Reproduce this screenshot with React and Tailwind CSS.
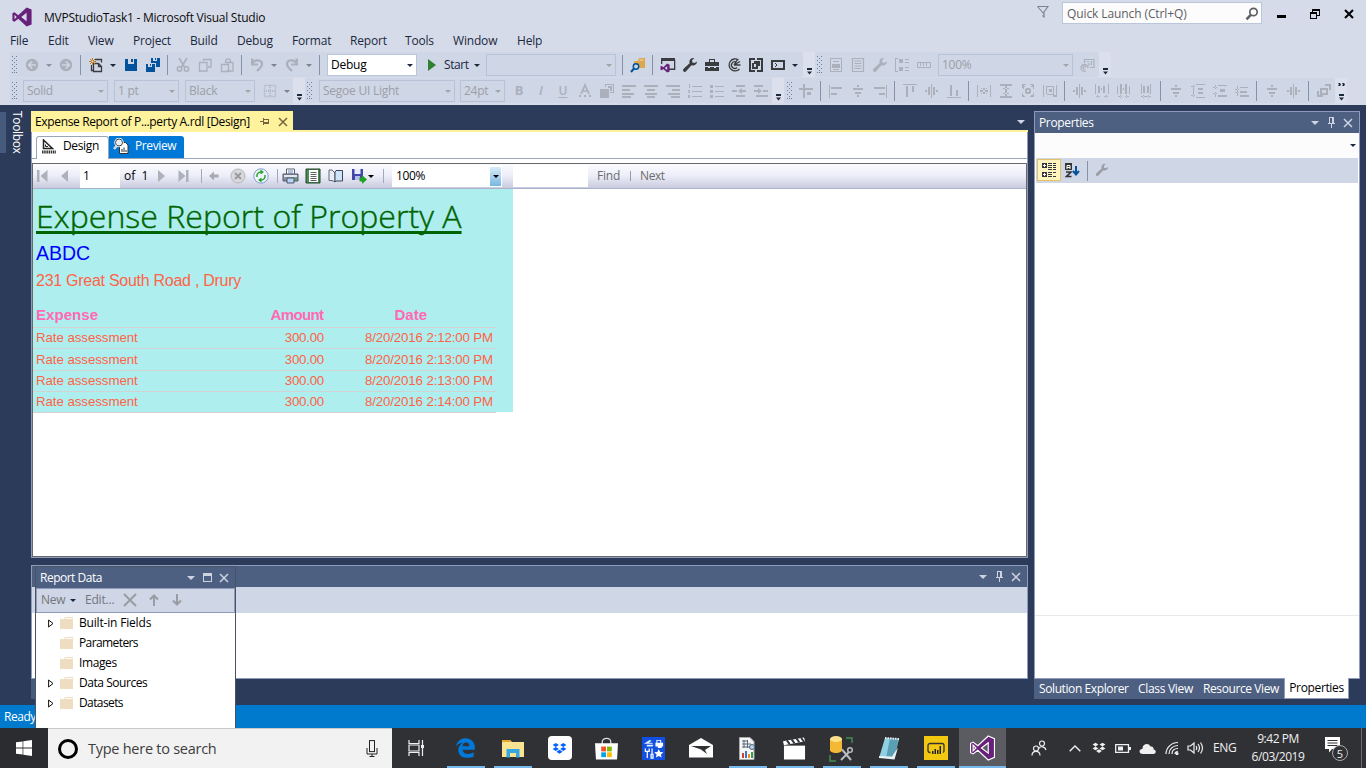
import React from "react";

const UI = "font-['Open_Sans','Noto_Sans',sans-serif]";

/* ---------- icon helpers ---------- */
function Ico({ children, className = "", size = 16, box = 16 }) {
  return (
    <svg className={"shrink-0 " + className} width={size} height={size} viewBox={`0 0 ${box} ${box}`} fill="currentColor">
      {children}
    </svg>
  );
}
function P({ d, className = "", crisp = true }) {
  return (
    <Ico className={className}>
      <path d={d} shapeRendering={crisp ? "crispEdges" : "auto"} />
    </Ico>
  );
}
function L({ d, w = 1, className = "" }) {
  return (
    <Ico className={className}>
      <path d={d} fill="none" stroke="currentColor" strokeWidth={w} />
    </Ico>
  );
}
const Slot = ({ children, className = "" }) => (
  <div className={"flex h-full w-[22px] shrink-0 items-center justify-center " + className}>{children}</div>
);
const Sep = () => (
  <div className="flex h-full w-2 shrink-0 items-center pl-[3px]">
    <div className="h-5 w-px bg-[#8591a9]" />
  </div>
);
const Caret = ({ className = "text-[#1b293e]" }) => (
  <svg className={"shrink-0 " + className} width="6" height="3" viewBox="0 0 6 3" fill="currentColor">
    <path d="M0 0h6L3 3z" />
  </svg>
);
const CaretSlot = ({ className }) => (
  <div className="flex h-full w-3 shrink-0 items-center justify-center">
    <Caret className={className} />
  </div>
);
const Grip = () => (
  <svg className="shrink-0" width="10" height="18" viewBox="0 0 10 18" fill="#6c7f9f" shapeRendering="crispEdges">
    {[0, 4, 8, 12, 16].map((y) => (
      <path key={y} d={`M2 ${y}h1v1h-1zM6 ${y}h1v1h-1zM4 ${y + 2 > 17 ? y : y + 2}h1v1h-1z`} />
    ))}
  </svg>
);
const Overflow = ({ arrows }) => (
  <div className="flex h-full w-3 shrink-0 justify-center bg-[#dce0ec] pt-[5px]">
    <svg width="7" height="18" viewBox="0 0 7 18" fill="#1b293e">
      {arrows && <path d="M0 0h2l1 1.500L2 3H0l1-1.500zM4 0h2l1 1.500L6 3H4l1-1.500z" />}
      <path d="M1 11h5v1.500h-5z" shapeRendering="crispEdges" />
      <path d="M1 14.500h5l-2.500 3z" />
    </svg>
  </div>
);
const Combo = ({ children, className, caret = "text-[#a2a4a5]" }) => (
  <div className={"flex h-[22px] shrink-0 items-center justify-between border pl-[3px] pr-[3px] text-[12px] tracking-[-0.25px] " + className}>
    <span>{children}</span>
    <Caret className={caret} />
  </div>
);
function VSLogo({ size, fill }) {
  return (
    <svg width={size} height={size} viewBox="0 0 24 24" fill={fill}>
      <path fillRule="evenodd" d="M17.500 0.500L23.500 3v18l-6 2.500L7.500 14.200 3 17.700 0.500 16.500v-9L3 6.300l4.500 3.500zM17.500 7L11 12l6.500 5zM3 9.300v5.400L5.700 12z" />
    </svg>
  );
}
const WRENCH = "M15 4.500a4 4 0 0 1-5.500 3.700L3.800 14.400a1.700 1.700 0 0 1-2.400-2.400L7.600 6.300A4 4 0 0 1 12.200 1L10 3.400l.4 2.100 2.200.5z";

/* ---------- first tool bar icons ---------- */
const CircleArrow = ({ flip }) => (
  <Ico className={flip ? "rotate-180 text-[#abb0bb]" : "text-[#abb0bb]"}>
    <circle cx="8" cy="8" r="6.200" />
    <path d="M12 8H5M8.200 4.500L4.700 8l3.500 3.500" stroke="#cfd6e5" strokeWidth="1.700" fill="none" />
  </Ico>
);
const NewItem = () => (
  <Ico className="text-[#3a3b3f]">
    <path d="M7 2.500h6.500v3M3.500 8v5.500h2M5.500 6.500h5l3 3v5h-8zM10.500 6.500v3h3" fill="none" stroke="currentColor" strokeWidth="1.300" />
    <path d="M4.500 1v7M1 4.500h7M2 2l5 5M7 2L2 7" stroke="#c27d1a" strokeWidth="1" />
    <circle cx="4.500" cy="4.500" r="1" fill="#cfd6e5" />
  </Ico>
);
const Save = () => (
  <Ico className="text-[#00539c]">
    <path fillRule="evenodd" d="M2 2h12v12H2zM5 2v5h6V2z" shapeRendering="crispEdges" />
    <path d="M8 2h2v3H8z" shapeRendering="crispEdges" />
  </Ico>
);
const SaveAll = () => (
  <Ico className="text-[#00539c]">
    <path d="M6 1h9v9h-4V6H6z M1 7h9v8H1z" shapeRendering="crispEdges" />
    <path d="M8 1h4v3H8zM3 7h4v3H3z" fill="#cfd6e5" shapeRendering="crispEdges" />
    <path d="M10 1h1v2h-1zM5 7h1v2H5z" shapeRendering="crispEdges" />
  </Ico>
);
const Cut = () => (
  <Ico className="text-[#abb0bb]">
    <path d="M4 1l5.500 9M12 1L6.500 10" stroke="currentColor" strokeWidth="1.700" fill="none" />
    <circle cx="4.500" cy="12" r="2.200" fill="none" stroke="currentColor" strokeWidth="1.500" />
    <circle cx="11.500" cy="12" r="2.200" fill="none" stroke="currentColor" strokeWidth="1.500" />
  </Ico>
);
const Undo = ({ flip }) => (
  <Ico className={flip ? "-scale-x-100 text-[#abb0bb]" : "text-[#abb0bb]"}>
    <path d="M4 6C6 2 13 2.500 13 7c0 2.500-2 4-5 7" fill="none" stroke="currentColor" strokeWidth="2.200" />
    <path d="M2 1.500v7h7V6.500H4.500l0-5z" />
  </Ico>
);

function TitleBar() {
  return (
    <div className="flex h-8 shrink-0 items-start">
      <div className="ml-3 mt-[7px] w-8"><VSLogo size={20} fill="#68217a" /></div>
      <div className="mt-2 w-[988px] text-[12px] leading-[20px] tracking-[-0.25px] text-[#0b0b0b]">MVPStudioTask1 - Microsoft Visual Studio</div>
      <svg className="ml-[4px] mt-[5px]" width="14" height="14" viewBox="0 0 14 14" fill="none" stroke="#7b828f" strokeWidth="1.100">
        <path d="M1.500 1.500h10.500L8 7v5L6.500 10.500M1.500 1.500L8 9" />
      </svg>
      <div className="ml-3 mt-[2px] flex h-[22px] w-[200px] items-center justify-between border border-[#bac6d9] bg-[#fcfcfc] pl-1 pr-[2px] pt-px">
        <span className="text-[12px] tracking-[-0.1px] text-[#5c5f66]">Quick Launch (Ctrl+Q)</span>
        <svg width="14" height="14" viewBox="0 0 14 14" fill="none" stroke="#5c5f66">
          <circle cx="8.500" cy="5" r="3.700" strokeWidth="1.700" />
          <path d="M5.800 7.800L1.500 12.300" strokeWidth="2.600" />
        </svg>
      </div>
      <div className="ml-[15px] mt-[15px] h-[3px] w-[9px] bg-black" />
      <svg className="ml-6 mt-[9px]" width="10" height="10" viewBox="0 0 10 10" fill="#000" shapeRendering="crispEdges">
        <path fillRule="evenodd" d="M2 0h8v7H7v3H0V3h2zM3 2v1h4v3h2V2zM1 5v4h5V5z" />
      </svg>
      <svg className="ml-6 mt-[9px]" width="10" height="10" viewBox="0 0 10 10" stroke="#000" strokeWidth="2"><path d="M1 1l8 8M9 1L1 9" /></svg>
    </div>
  );
}

function MenuBar() {
  return (
    <div className="flex h-5 shrink-0 pl-[10px] text-[12px] leading-[18px] tracking-[-0.18px] text-[#1b293e]">
      <span className="w-[38px]">File</span><span className="w-10">Edit</span><span className="w-[45px]">View</span>
      <span className="w-[57px]">Project</span><span className="w-[47px]">Build</span><span className="w-[55px]">Debug</span>
      <span className="w-[58px]">Format</span><span className="w-[55px]">Report</span><span className="w-12">Tools</span>
      <span className="w-16">Window</span><span>Help</span>
    </div>
  );
}

function ToolBarTop() {
  return (
    <div className="flex h-[25px] shrink-0 pl-[10px] text-[#abb0bb]">
      <div className="flex items-center bg-[#cfd6e5] pt-px">
        <Grip />
        <Slot className="ml-px"><CircleArrow /></Slot>
        <CaretSlot className="text-[#8d939e]" />
        <Slot><CircleArrow flip /></Slot>
        <Sep />
        <Slot><NewItem /></Slot>
        <CaretSlot />
        <Slot className="ml-px"><Save /></Slot>
        <Slot><SaveAll /></Slot>
        <Sep />
        <Slot><Cut /></Slot>
        <Slot><L d="M6.500 4V2.500h7.500v7.500H11M2.500 5.500h7.500v8.500H2.500z" w={1.300} /></Slot>
        <Slot><L d="M6.500 6V4.500c0-3.500 5-3.500 5 0v1H14v8.500H7.500M2.500 7.500h7v7h-7zM7 5.500h6" w={1.300} /></Slot>
        <Sep />
        <Slot><Undo /></Slot>
        <CaretSlot className="text-[#7d828c]" />
        <Slot className="ml-px"><Undo flip /></Slot>
        <CaretSlot className="text-[#7d828c]" />
        <div className="w-px" />
        <Sep />
        <Combo className="ml-[3px] w-[90px] border-[#bac6d9] bg-white text-black" caret="text-[#1b293e]">Debug</Combo>
        <Slot className="ml-1 text-[#2f8132]"><Ico><path d="M4 2v12l8-6z" /></Ico></Slot>
        <span className="ml-px w-[30px] text-[12px] tracking-[-0.45px] text-[#1b293e]">Start</span>
        <Caret />
        <Combo className="ml-[6px] w-[130px] border-[#b9c3d7]" />
        <div className="w-[3px]" />
        <Sep />
        <Slot>
          <Ico>
            <path d="M4 4h4l1-3h6v10H4z" fill="#dba850" />
            <path d="M9.500 3h4" stroke="#f2dcb0" />
            <circle cx="6" cy="9.500" r="2.700" fill="#cfd6e5" stroke="#00539c" strokeWidth="1.500" />
            <path d="M4 11.500L1 15" stroke="#00539c" strokeWidth="2" />
          </Ico>
        </Slot>
        <Sep />
        <Slot className="text-[#3a3b3f]">
          <Ico>
            <path d="M1 1h14v3H1zM14 3h1.300v10H9v-1.500h5zM1 3h1.300v4H1z" />
            <g transform="translate(0.500,6.500) scale(0.380)" fill="#68217a"><path fillRule="evenodd" d="M17.500 0L24 3v18l-6.500 3L7.500 14.200 3 17.700 0 16.500v-9L3 6.300l4.500 3.500zM17.500 7L11 12l6.500 5z" /></g>
          </Ico>
        </Slot>
        <Slot className="text-[#3a3b3f]"><P d={WRENCH} crisp={false} /></Slot>
        <Slot className="text-[#3a3b3f]"><P d="M5 2h6v3h4v4H1V5h4zM6 3v2h4V3zM1 10h3v1h2v-1h4v1h2v-1h3v4H1z" /></Slot>
        <Slot className="text-[#3a3b3f]"><L d="M12.500 3A6 6 0 1 0 13.500 12M10.500 5.300A3.300 3.300 0 1 0 11 10.500M8 8l3.500-5.500M8 8l6-3.500M8 8h6.500" w={1.300} /></Slot>
        <Slot className="text-[#3a3b3f]"><Ico><path fillRule="evenodd" shapeRendering="crispEdges" d="M1 1h6v2H3v10h4v2H1zM9 1h6v14H9v-2h4V3H9z" /><path fillRule="evenodd" d="M6 4h6v5h-2v3H4V6h2zM6 7v3h2V7z" shapeRendering="crispEdges" /></Ico></Slot>
        <Slot className="text-[#3a3b3f]"><Ico><path fillRule="evenodd" shapeRendering="crispEdges" d="M1 3h14v10H1zM3 5v6h10V5z" /><path d="M5 6l2 2-2 2" stroke="currentColor" fill="none" /></Ico></Slot>
        <CaretSlot />
        <div className="w-[2px]" />
      </div>
      <Overflow />
      <div className="flex items-center bg-[#cfd6e5] pt-px">
        <Grip />
        <Slot><P d="M2 1h12v14H2zM3 2v12h10V2zM5 4h6v1H5zM4 7h8v4H4zM5 8v0h6v0zM5 12h6v1H5z" /></Slot>
        <Slot><L d="M2.500 1.500h11v13h-11zM4.500 4h7M4.500 6.500h7M4.500 9h7M4.500 11.500h7" w={1.200} /></Slot>
        <Slot><P d={WRENCH} crisp={false} /></Slot>
        <Slot><P d="M1 1h3v1H2v12h2v1H1zM5 2h4v4H5zM5 10h4v4H5zM11 2h4v1h-4zM11 5h4v1h-4zM11 10h4v1h-4zM11 13h4v1h-4z" /></Slot>
        <Slot><P d="M1 5h14v6H1zM2 6v4h12V6zM4 6h1v3H4zM7 6h1v3H7zM10 6h1v3h-1z" /></Slot>
        <Combo className="ml-[3px] w-[135px] border-[#b9c3d7] text-[#9ba0a8]">100%</Combo>
        <Slot className="ml-[3px]"><L d="M5.500 6V2.500h9.500v8H11M8 4.500h2M12.500 4v4M10 6v3M9 11a3.500 3.500 0 1 0-2 3M7 10.500a1.500 1.500 0 1 0-1 1.500" w={1.200} /></Slot>
        <div className="w-px" />
      </div>
      <Overflow />
    </div>
  );
}

const HBARS = "M1 7h2v2H1zM4 4h2v8H4zM7 1h1v14H7zM9 4h2v8H9zM12 7h2v2h-2z";
const VBARS = "M7 2h2v2H7zM3 5h10v2H3zM5 9h6v2H5zM7 12h2v2H7z";
const ICONS2 = [
  ["M1 2h1v13H1zM3 4h11v2H3zM3 10h6v2H3z", VBARS, "M14 2h1v13h-1zM2 4h11v2H2zM7 10h6v2H7z"],
  ["M1 1h14v1H1zM4 3h2v11H4zM10 3h2v6h-2z", HBARS, "M1 14h14v1H1zM4 2h2v11H4zM10 7h2v6h-2z"],
  ["M1 2h1v12H1zM14 2h1v12h-1zM4 7h8v2H4zM7 5h2v6H7zM5 5h1v1H5zM10 5h1v1h-1zM5 10h1v1H5zM10 10h1v1h-1z", "M2 1h12v2H2zM2 13h12v2H2zM7 3h2v10H7zM5 5h6v1H5zM5 10h6v1H5z", "M2 1h4v1H4v1h1v1H4v2H3V5H2zM10 1h4v5h-1V4h-2V3h1V2h-2zM2 10h1v2h1v1h1v1H2zM13 10h1v4h-4v-1h1v-1h2zM6 5h4v1H6zM5 6h6v4H5zM6 10h4v1H6zM7 7v2h2V7z", "M1 2h1v12H1zM14 2h1v12h-1zM4 3h8v1H4zM4 4h1v7H4zM11 4h1v7h-1zM5 11h7v1H5zM7 6h3v3H7zM11 12h3v2h-3z"],
  [HBARS, "M1 1h1v10H1zM4 3h2v7H4zM7 5h1v2H7zM9 3h2v7H9zM14 1h1v10h-1zM2 13h4v1H2zM10 13h4v1h-4zM3 12h1v3H3zM12 12h1v3h-1z", "M1 3h1v8H1zM4 1h2v10H4zM7 5h1v2H7zM9 1h2v10H9zM13 3h1v8h-1zM2 13h4v1H2zM9 13h4v1H9zM4 12h1v3H4zM10 12h1v3h-1z", "M3 1h1v10H3zM5 3h2v7H5zM9 3h2v7H9zM12 1h1v10h-1zM3 13h10v1H3zM5 12h1v3H5zM10 12h1v3h-1z"],
  [VBARS, "M3 2h1v12H3zM1 3h4v1H1zM1 12h4v1H1zM6 1h9v1H6zM8 5h5v2H8zM8 9h5v2H8zM6 14h9v1H6z", "M3 2h1v4H3zM1 4h4v1H1zM3 9h1v5H3zM1 10h4v1H1zM6 2h9v1H6zM8 6h5v3H8zM6 12h9v2H6z", "M3 3h1v10H3zM1 6h4v1H1zM1 9h4v1H1zM6 4h8v1H6zM6 8h7v2H6zM6 12h9v2H6z"],
  [VBARS, HBARS],
  ["M1 8h2v4h4v2H1zM4 5h8v7H4zM6 7v3h4V7zM9 1h6v6h-2V3H9z"],
];

function ToolBarFormat() {
  return (
    <div className="mt-px flex h-[25px] shrink-0 pl-[10px] text-[#abb0bb]">
      <div className="flex items-center bg-[#cfd6e5] pt-px">
        <Grip />
        <Combo className="ml-[3px] w-[85px] border-[#b9c3d7] text-[#9ba0a8]">Solid</Combo>
        <Combo className="ml-[6px] w-[65px] border-[#b9c3d7] text-[#9ba0a8]">1 pt</Combo>
        <Combo className="ml-[6px] w-[70px] border-[#b9c3d7] text-[#9ba0a8]">Black</Combo>
        <Slot className="ml-1"><Ico><path d="M2.500 2.500h11v11h-11zM8 2v12M2 8h12" fill="none" stroke="currentColor" strokeDasharray="1 1" strokeWidth="1.300" /></Ico></Slot>
        <CaretSlot className="text-[#7d828c]" />
      </div>
      <Overflow />
      <div className="flex items-center bg-[#cfd6e5] pt-px">
        <Grip />
        <Combo className="ml-1 w-[136px] border-[#b9c3d7] text-[#9ba0a8]">Segoe UI Light</Combo>
        <Combo className="ml-[5px] w-[45px] border-[#b9c3d7] text-[#9ba0a8]">24pt</Combo>
        <Slot className="ml-[3px] text-[13px] font-bold">B</Slot>
        <Slot className="text-[13px] font-semibold italic">I</Slot>
        <Slot className="text-[12px] font-semibold underline underline-offset-2">U</Slot>
        <Slot><Ico><path d="M4 11L8 2l4 9M5.500 8h5" fill="none" stroke="currentColor" strokeWidth="1.700" /><path d="M2 12h2v2H2zM7 12h2v2H7zM12 12h2v2h-2z" /></Ico></Slot>
        <Slot><Ico><path fillRule="evenodd" shapeRendering="crispEdges" d="M6 1h9v9h-4V9h3V2H7v2H6zM9 3h4v5h-2V5H9zM1 6h9v9H1z" /></Ico></Slot>
        <Slot><P d="M1 2h14v2H1zM1 6h8v2H1zM1 10h12v2H1zM1 13h9v2H1z" /></Slot>
        <Slot><P d="M1 2h14v2H1zM4 6h8v2H4zM2 10h12v2H2zM4 13h8v2H4z" /></Slot>
        <Slot><P d="M1 2h14v2H1zM7 6h8v2H7zM3 10h12v2H3zM6 13h9v2H6z" /></Slot>
        <Slot><P d="M2 1h1v4H2zM1 7h2v1H1zM2 8h1v2H1zM1 12h2v3H1zM5 3h10v1H5zM5 8h10v1H5zM5 13h10v1H5z" /></Slot>
        <Slot><P d="M1 2h3v3H1zM1 7h3v3H1zM1 12h3v3H1zM6 3h9v1H6zM6 8h9v1H6zM6 13h9v1H6z" /></Slot>
        <Slot><P d="M5 2h9v2H5zM1 7h5v2H1zM7 8l4-3v2h4v2h-4v2zM5 12h9v2H5z" crisp={false} /></Slot>
        <Slot><P d="M1 2h9v2H1zM10 7h5v2h-5zM9 8L5 5v2H1v2h4v2zM3 12h12v2H3z" crisp={false} /></Slot>
      </div>
      <Overflow />
      <div className="flex items-center bg-[#cfd6e5] pt-px">
        <div className="w-px" />
        <Grip />
        <Slot><P d="M1 5h14v2H1zM5 1h2v14H5zM9 9h4v3H9z" /></Slot>
        {ICONS2.map((group, i) => (
          <React.Fragment key={i}>
            <Sep />
            {group.map((d, j) => (
              <Slot key={j}><Ico><path d={d} fillRule="evenodd" shapeRendering="crispEdges" /></Ico></Slot>
            ))}
          </React.Fragment>
        ))}
      </div>
      <Overflow arrows />
    </div>
  );
}

/* ---------- document well ---------- */
const Pin = ({ className }) => (
  <svg className={"shrink-0 " + className} width="9" height="11" viewBox="0 0 9 11" fill="currentColor" shapeRendering="crispEdges">
    <path d="M2 0h5v6h1v1H5v4H4V7H1V6h1zM3 1v5h2V1z" fillRule="evenodd" />
  </svg>
);
const Close = ({ size = 9, className }) => (
  <svg className={"shrink-0 " + className} width={size} height={size} viewBox="0 0 10 10" stroke="currentColor" strokeWidth="1.500"><path d="M1 1l8 8M9 1L1 9" /></svg>
);

function ViewerToolBar() {
  return (
    <div className="flex h-[25px] shrink-0 items-center border-b border-[#a9b3cc] bg-linear-to-b from-[#fbfbff] via-[#ecedf8] to-[#c9cbdf] text-[12px] text-black">
      <svg className="ml-1 shrink-0" width="11" height="12" viewBox="0 0 11 12" fill="#aeb1b9"><path d="M0 0h2.500v12H0zM10.500 0v12L3.500 6z" /></svg>
      <svg className="ml-[13px] shrink-0" width="7" height="12" viewBox="0 0 7 12" fill="#aeb1b9"><path d="M7 0v12L0 6z" /></svg>
      <div className="ml-3 flex h-full w-10 items-center bg-white pl-[3px]">1</div>
      <span className="ml-1 w-[34px] whitespace-pre">of  1</span>
      <svg className="shrink-0" width="7" height="12" viewBox="0 0 7 12" fill="#aeb1b9"><path d="M0 0v12L7 6z" /></svg>
      <svg className="ml-[13px] shrink-0" width="11" height="12" viewBox="0 0 11 12" fill="#aeb1b9"><path d="M8 0h2.500v12H8zM0.500 0v12L7.500 6z" /></svg>
      <div className="ml-3 h-[14px] w-px bg-[#a3a8bd]" />
      <svg className="ml-[7px] shrink-0" width="10" height="10" viewBox="0 0 10 10" fill="#a6a9ae"><path d="M0 5l5-4.500v3h4.500v3H5v3z" /></svg>
      <svg className="ml-[11px] shrink-0" width="16" height="16" viewBox="0 0 16 16"><circle cx="8" cy="8" r="7" fill="#d9d9dc" stroke="#b5b6ba" /><path d="M5 5l6 6M11 5l-6 6" stroke="#999ba0" strokeWidth="2" /></svg>
      <svg className="ml-[7px] shrink-0" width="16" height="16" viewBox="0 0 16 16"><circle cx="8" cy="8" r="7.200" fill="#eef5fd" stroke="#7f9fd0" /><path d="M4 9c-.5-3 1-5 4-5M12 7c.5 3-1 5-4 5" stroke="#2ba22b" strokeWidth="1.500" fill="none" /><path d="M7.500 1.500L11 4 7.500 6.500zM8.500 9.500v5L5 12z" fill="#2ba22b" /></svg>
      <div className="ml-2 h-[14px] w-px bg-[#a3a8bd]" />
      <svg className="ml-1 shrink-0" width="17" height="16" viewBox="0 0 17 16"><path d="M4.500 1h8v6h-8z" fill="#fff" stroke="#5a6270" /><path d="M6 3h5M6 5h5" stroke="#6e86b8" /><path d="M1 6h15v7H1z" fill="#8b93a2" stroke="#50586a" /><path d="M2 8h13" stroke="#e3e7ef" strokeWidth="2" /><path d="M5 10h7v5H5z" fill="#b9d2f2" stroke="#4a566e" /><circle cx="14" cy="11" r="1" fill="#3bb23b" /></svg>
      <svg className="ml-[6px] shrink-0" width="16" height="16" viewBox="0 0 16 16"><path d="M1 1h14v14H1z" fill="#4f8a57" stroke="#20462a" /><path d="M4 2h9v12H4z" fill="#fff" /><path d="M5.500 4.500h6M5.500 6.500h6M5.500 8.500h6M5.500 10.500h6M5.500 12.500h6" stroke="#5a5f68" /></svg>
      <svg className="ml-[7px] shrink-0" width="16" height="14" viewBox="0 0 16 14"><path d="M1 1h3l3 3v9l-3-1.500H1z" fill="#e9edf5" stroke="#60687a" /><path d="M8 1.500h6.500V12H8l-1 1V3z" fill="#cfe3f9" stroke="#3d4552" /></svg>
      <svg className="ml-[7px] shrink-0" width="16" height="16" viewBox="0 0 16 16"><path d="M1 1h11v11H1z" fill="#4146a8" /><path d="M3.500 1h6v5h-6z" fill="#e8eaff" /><path d="M4 8h5v4H4z" fill="#b8bce8" /><path d="M8.500 9.500h2.500V7l5 4.500-5 4.500v-2.500h-2.500z" fill="#22a022" /></svg>
      <Caret className="ml-px text-black" />
      <div className="ml-[9px] h-[14px] w-px bg-[#a3a8bd]" />
      <div className="ml-2 flex h-[22px] w-[110px] items-center justify-between bg-white pl-1 pr-px tracking-[-0.400px]">
        <span>100%</span>
        <span className="flex h-[19px] w-[11px] items-center justify-center bg-linear-to-b from-[#d9ecf9] to-[#76b7e0]"><Caret className="text-black" /></span>
      </div>
      <div className="ml-[11px] h-[22px] w-[75px] bg-white" />
      <span className="ml-[9px] w-[33px] tracking-[-0.2px] text-[#6d6d6d]">Find</span>
      <div className="h-[10px] w-px bg-[#9a9a9a]" />
      <span className="ml-[9px] tracking-[-0.400px] text-[#6d6d6d]">Next</span>
    </div>
  );
}

const ROWS = ["8/20/2016 2:12:00 PM", "8/20/2016 2:13:00 PM", "8/20/2016 2:13:00 PM", "8/20/2016 2:14:00 PM"];

function Report() {
  return (
    <div className="h-[223px] w-[480px] bg-[#afeeee] font-['Liberation_Sans',sans-serif]">
      <div className="h-[52px] whitespace-nowrap pl-[3px] pt-[6px] font-['Open_Sans','Noto_Sans',sans-serif] text-[32px] font-light leading-[42px] tracking-[0.040px] text-[#006400] underline decoration-[3px] underline-offset-[3px] [-webkit-text-stroke:0.4px] [text-decoration-skip-ink:none]">Expense Report of Property A</div>
      <div className="h-7 pl-[3px] text-[19.500px] leading-[24px] text-[#0000ff]">ABDC</div>
      <div className="h-[31px] pl-[3px] pt-px text-[16px] leading-[22px] tracking-[-0.270px] text-[#ff6347]">231 Great South Road , Drury</div>
      <div className="flex h-[28px] w-[463px] items-end border-b border-[#d3d3d3] pb-1 pl-[3px] text-[15px] font-bold leading-[17px] text-[#ff69b4]">
        <span className="w-[188px] tracking-[0.050px]">Expense</span>
        <span className="w-[101px] text-right tracking-[-0.600px]">Amount</span>
        <span className="w-[173px] pl-[71px]">Date</span>
      </div>
      {ROWS.map((date, i) => (
        <div key={i} className={(i === 1 ? "h-[22px]" : "h-[21px]") + " flex w-[463px] items-end border-b border-[#d3d3d3] pb-[3px] pl-[3px] text-[13.300px] leading-[15px] text-[#ff6347]"}>
          <span className="w-[188px] tracking-[-0.070px]">Rate assessment</span>
          <span className="w-[100px] text-right tracking-[-0.250px]">300.00</span>
          <span className="w-[169px] whitespace-nowrap text-right tracking-[-0.140px]">{date}</span>
        </div>
      ))}
    </div>
  );
}

function Document() {
  return (
    <div className="flex h-[447px] flex-col">
      <div className="flex h-[19px]">
        <div className="flex w-[262px] items-center bg-[#fff29d] pl-1 pt-0.5 text-[12px] text-black">
          <span className="w-[225px] whitespace-nowrap tracking-[-0.350px]">Expense Report of P...perty A.rdl [Design]</span>
          <svg className="shrink-0 text-[#75633d]" width="9" height="7" viewBox="0 0 9 7" fill="currentColor" shapeRendering="crispEdges"><path d="M0 3h3V0h1v1h5v5H4v1H3V4H0zM4 2v2h4V2z" fillRule="evenodd" /></svg>
          <Close size={10} className="ml-[9px] text-[#75633d]" />
        </div>
        <div className="flex flex-1 items-center justify-end pr-[3px] pt-[3px]"><svg width="8" height="4" viewBox="0 0 8 4" fill="#cfd6e5"><path d="M0 0h8L4 4z" /></svg></div>
      </div>
      <div className="h-0.5 shrink-0 bg-[#fff29d]" />
      <div className="flex flex-1 flex-col border border-t-0 border-[#8e9bbc] bg-white">
        <div className="flex h-[27px] shrink-0 items-end border-b border-[#9aa5b8] pl-1 text-[12px]">
          <div className="-mb-px flex h-[23px] w-[73px] items-center rounded-t-[3px] border border-b-0 border-[#9aa5b8] bg-white pl-[5px] pb-1">
            <svg width="14" height="15" viewBox="0 0 14 15" fill="none" stroke="#222"><path d="M1.500 1v8.500h9z" strokeWidth="1.500" /><path d="M3.500 5.500v2H6" /><path d="M0 13h14" strokeWidth="3" stroke="#333" strokeDasharray="1.500 .7" /></svg>
            <span className="ml-[7px] tracking-[-0.350px]">Design</span>
          </div>
          <div className="flex h-[22px] w-[75px] items-center rounded-tr-[3px] bg-[#0078d7] pb-[2px] pl-1 text-white">
            <svg width="16" height="16" viewBox="0 0 16 16"><path d="M6.500 4.500h6l2.500 2.500v8.500H6.500z" fill="#fff" stroke="#333" /><path d="M9 14v-3M11 14V9.500M13 14v-2" stroke="#333" /><circle cx="6" cy="4.500" r="3.500" fill="#d9eafa" stroke="#fff" strokeWidth="2.500" /><circle cx="6" cy="4.500" r="3.500" fill="#e9f2fa" stroke="#444" /><path d="M4 7.500L1 11" stroke="#ddd" strokeWidth="2.500" /></svg>
            <span className="ml-[6px] tracking-[-0.400px]">Preview</span>
          </div>
        </div>
        <div className="mt-1 flex flex-1 flex-col border border-[#696969]">
          <ViewerToolBar />
          <Report />
        </div>
      </div>
    </div>
  );
}

function PanelButtons() {
  return (
    <div className="flex items-center text-[#ced4df]">
      <svg width="8" height="4" viewBox="0 0 8 4" fill="currentColor"><path d="M0 0h8L4 4z" /></svg>
      <Pin className="ml-2" />
      <Close className="ml-[7px]" size={10} />
    </div>
  );
}

function PropertiesPanel() {
  return (
    <div className="mt-[6px] flex h-[588px] w-[326px] shrink-0 flex-col">
      <div className="flex h-[568px] shrink-0 flex-col border border-[#8e9bbc] bg-white">
        <div className="flex h-[21px] shrink-0 items-center justify-between bg-[#4d6082] pl-1 pr-[6px] text-[12px] tracking-[-0.350px] text-white">
          <span>Properties</span><PanelButtons />
        </div>
        <div className="flex h-[25px] shrink-0 items-center justify-end bg-[#fcfcfc] pr-[3px]"><Caret /></div>
        <div className="mx-px flex h-[25px] shrink-0 items-center bg-[#cfd6e5]">
          <div className="mb-px ml-px flex h-[22px] w-6 items-center justify-center border border-[#e5c365] bg-[#fdf4bf] text-[#33363d]">
            <Ico><path d="M1 1h5v5H1zM1 10h5v5H1zM7 1h4v1H7zM12 1h3v1h-3zM7 3h4v1H7zM12 3h3v1h-3zM7 5h4v1H7zM12 5h3v1h-3zM7 7h4v1H7zM12 7h3v1h-3zM7 10h4v1H7zM7 12h4v1H7zM7 14h4v1H7zM12 10h3v1h-3zM12 14h3v1h-3z" shapeRendering="crispEdges" /><path d="M2 3.500h3M3.500 2v3M2 12.500h3M3.500 11v3" stroke="#fff" /></Ico>
          </div>
          <svg className="ml-1 mb-px shrink-0" width="16" height="16" viewBox="0 0 16 16"><path d="M0 1h7v7H0z" fill="#333" /><path d="M2 7V3.500h3V7M2 5.500h3" stroke="#fff" fill="none" /><path d="M1 10h5l-4.500 4.500H6.500" stroke="#333" fill="none" strokeWidth="1.600" /><path d="M11 4v8M8 9l3 3.500L14 9" stroke="#00539c" fill="none" strokeWidth="2" /></svg>
          <div className="ml-[6px] h-5 w-px bg-[#8591a9]" />
          <div className="mb-px ml-[7px] text-[#9a9da3]"><svg width="14" height="14" viewBox="0 0 16 16" fill="currentColor"><path d={WRENCH} /></svg></div>
        </div>
        <div className="h-[433px] shrink-0 border-b border-[#e9e9ec]" />
      </div>
      <div className="flex h-5 text-[12px] text-white">
        <div className="flex h-5 w-[250px] items-center bg-[#4d6082] pl-[5px] tracking-[-0.400px]">
          <span className="w-[99px]">Solution Explorer</span><span className="w-[65px] tracking-[-0.300px]">Class View</span><span>Resource View</span>
        </div>
        <div className="-mt-px flex h-[21px] w-[65px] items-center justify-center border border-t-0 border-[#8e9bbc] bg-white tracking-[-0.350px] text-black">Properties</div>
      </div>
    </div>
  );
}

function OutputPanel() {
  return (
    <div className="mt-[7px] flex h-[134px] flex-col">
      <div className="flex h-[114px] flex-col border border-[#8e9bbc] bg-white">
        <div className="flex h-[21px] shrink-0 items-center justify-end bg-[#4d6082] pr-[6px]"><PanelButtons /></div>
        <div className="h-[26px] shrink-0 bg-[#cfd6e5]" />
      </div>
      <div className="h-5 w-2 bg-[#465a7d]" />
    </div>
  );
}

const TREE = [["Built-in Fields", true], ["Parameters", false], ["Images", false], ["Data Sources", true], ["Datasets", true]];
const TREE_TRACKING = ["tracking-[-0.180px]", "tracking-[-0.600px]", "tracking-[-0.400px]", "tracking-[-0.450px]", "tracking-[-0.600px]"];

function ReportData() {
  return (
    <div className="absolute left-[35px] top-[566px] flex h-[162px] w-[201px] flex-col border border-b-0 border-[#4a5364] bg-white text-[12px]">
      <div className="flex h-[21px] shrink-0 items-center bg-[#4d6082] pl-1 text-white">
        <span className="w-[147px] tracking-[-0.6px]"><span className="tracking-[-0.500px]">Report Data</span></span>
        <svg width="8" height="4" viewBox="0 0 8 4" fill="#ced4df"><path d="M0 0h8L4 4z" /></svg>
        <div className="ml-2 h-[9px] w-[9px] border border-t-[3px] border-[#ced4df]" />
        <Close size={10} className="ml-[7px] text-[#ced4df]" />
      </div>
      <div className="flex h-[25px] shrink-0 items-center border border-[#8e9bbc] bg-[#cfd6e5] pb-px pl-1 text-[#72767e]">
        <span className="w-[29px] tracking-[-0.3px]">New</span><Caret />
        <span className="ml-[9px] w-[38px] tracking-[-0.2px]">Edit...</span>
        <svg width="14" height="14" viewBox="0 0 14 14" stroke="#999ca3" strokeWidth="2"><path d="M1 1l12 12M13 1L1 13" /></svg>
        <svg className="ml-3" width="10" height="12" viewBox="0 0 10 12" stroke="#999ca3" strokeWidth="2" fill="none"><path d="M5 12V1.500M1 5.500l4-4 4 4" /></svg>
        <svg className="ml-[13px]" width="10" height="12" viewBox="0 0 10 12" stroke="#999ca3" strokeWidth="2" fill="none"><path d="M5 0v10.500M1 6.500l4 4 4-4" /></svg>
      </div>
      {TREE.map(([name, open], i) => (
        <div key={name} className="flex h-5 shrink-0 items-center pl-3 text-black">
          <svg className="shrink-0" width="6" height="9" viewBox="0 0 6 9">{open && <path d="M.6 1v7l4.400-3.500z" fill="none" stroke="#111" />}</svg>
          <svg className="ml-[6px] shrink-0" width="13" height="12" viewBox="0 0 13 12"><path d="M0 2h4l1-2h8v12H0z" fill="#efddc2" /><path d="M5.500 1.500h7" stroke="#fff" /></svg>
          <span className={"ml-[6px] whitespace-nowrap " + TREE_TRACKING[i]}>{name}</span>
        </div>
      ))}
    </div>
  );
}

/* ---------- Windows task bar ---------- */
const Task = ({ children, bar, active }) => (
  <div className={"flex h-10 w-[47px] shrink-0 flex-col items-center " + (active ? "bg-[#5b5c61]" : "")}>
    <div className="flex h-[38px] items-center justify-center pt-0.5">{children}</div>
    {bar && <div className={(active ? "w-full" : "w-[38px]") + " h-0.5 bg-[#76b9ed]"} />}
  </div>
);
const DROP = "M6 1l5 3.200L6 7.400 1 4.200zM18 1l5 3.200-5 3.200-5-3.200zM6 7.600l5 3.200L6 14 1 10.800zM18 7.600l5 3.200-5 3.200-5-3.200zM12 12l5 3.200-5 3.200-5-3.200z";

function TaskBar() {
  return (
    <div className="flex h-10 shrink-0 bg-[#303135]">
      <div className="flex w-12 items-center justify-center bg-[#2a2c2f]">
        <svg width="16" height="16" viewBox="0 0 16 16" fill="#fff"><path d="M0 2.300L6.600 1.400v6.200H0zM7.300 1.300L16 0v7.600H7.300zM0 8.400h6.600v6.200L0 13.700zM7.300 8.400H16V16l-8.700-1.300z" /></svg>
      </div>
      <div className="flex w-[344px] items-center border-t border-[#c9c9c9] bg-[#f2f2f2]">
        <div className="ml-[10px] h-5 w-5 rounded-full border-[3px] border-black" />
        <span className="ml-[10px] w-[278px] text-[14.500px] tracking-[-0.260px] text-[#3d3d3d]">Type here to search</span>
        <svg width="12" height="17" viewBox="0 0 12 17" fill="none" stroke="#222"><rect x="3.500" y=".6" width="5" height="11" /><path d="M1 8v6h10V8M6 14v2.500M3.500 16.500h5" /></svg>
      </div>
      <div className="flex w-[50px] items-center pl-4">
        <svg width="17" height="16" viewBox="0 0 17 16" fill="none" stroke="#eee" strokeWidth="1.200"><path d="M1 0v3.500h10V0M1 5h10v6H1zM1 16v-3.500h10V16M14.500 0v16" /><path d="M13 5h3v3h-3z" fill="#eee" stroke="none" /></svg>
      </div>
      <Task bar>
        <svg width="21" height="22" viewBox="0 0 22 22"><path d="M1 9.500C2 3.500 6.500.8 11 .8c6.500 0 9.800 4.700 9.800 9.400v2.600H8c.2 3 2.600 4.400 5.600 4.400 2.400 0 4.200-.6 6-1.700v4.300c-1.800 1-4 1.500-6.600 1.500-6 0-9.600-3.400-9.600-8.300 0-3.500 2-6 4.800-7.300C4.800 6 2.600 7 1 9.500zM8 9.200h7c0-2.600-1.300-3.900-3.400-3.900-2 0-3.300 1.500-3.600 3.900z" fill="#0078d7" fillRule="evenodd" /></svg>
      </Task>
      <Task bar>
        <svg width="22" height="19" viewBox="0 0 22 19"><path d="M0 1h8l2 2h12v15H0z" fill="#fce391" /><path d="M0 1h8l1.500 2H0z" fill="#e2a92f" /><path d="M4.500 10h13v8.500H14V14H8v4.500H4.500z" fill="#32a7e2" /></svg>
      </Task>
      <Task>
        <div className="flex h-6 w-6 items-center justify-center rounded bg-white"><svg width="15" height="13" viewBox="0 0 24 20" fill="#0061fe"><path d={DROP} /></svg></div>
      </Task>
      <Task>
        <svg width="23" height="23" viewBox="0 0 24 23"><path d="M7.500 8V5c0-5.500 9-5.500 9 0v3" fill="none" stroke="#ddd" strokeWidth="1.300" /><path d="M0 6h24l-1 17H1z" fill="#fff" /><path d="M6.500 9.500h5v5h-5z" fill="#f25022" /><path d="M12.500 9.500h5v5h-5z" fill="#7fba00" /><path d="M6.500 15.500h5v5h-5z" fill="#00a4ef" /><path d="M12.500 15.500h5v5h-5z" fill="#ffb900" /></svg>
      </Task>
      <Task>
        <svg width="23" height="23" viewBox="0 0 24 24"><path d="M0 0h24v24H0z" fill="#1250e4" /><path d="M2 7l6-4 2 1-3 2h4v1H3zM5 8h7l-1 2H5z" fill="#e8f0ff" /><path d="M15 3h5v3h2v4h-1.500v1.500h-4V10H14V6h1zM16 4v2h3V4z" fill="#fff" fillRule="evenodd" /><path d="M3.500 12v3h4v-3M5.500 15v7M10.500 12v6M9.500 18h2v4h-2z" stroke="#fff" strokeWidth="1.300" fill="none" /><path d="M17.500 12.500l1.400 3.100 3.400.4-2.500 2.200.7 3.300-3-1.700-3 1.700.7-3.300-2.500-2.200 3.400-.4z" fill="#fff" /></svg>
      </Task>
      <Task>
        <svg width="24" height="20" viewBox="0 0 24 20"><path d="M0 7L12 0l12 7v12.500H0z" fill="#fff" /><path d="M2 8h20l-6 4 2 4-6-4.500z" fill="#303135" /></svg>
      </Task>
      <Task bar>
        <svg width="17" height="23" viewBox="0 0 17 23"><path d="M.5.500H11l4 4v18H.5z" fill="#f4f6f8" stroke="#aaa" /><path d="M3 4h6M3 7h9M3 10h9M5 3v8M8.500 3v8" stroke="#5b6877" /><path d="M3 16h2v5H3z" fill="#d04030" /><path d="M6 14h2v7H6z" fill="#3a76c4" /><path d="M9 17h2v4H9z" fill="#f09020" /><path d="M12 15h2v6h-2z" fill="#38a048" /><circle cx="13" cy="10" r="2.500" fill="#b9d4f0" stroke="#567" /></svg>
      </Task>
      <Task bar>
        <svg width="23" height="23" viewBox="0 0 24 23"><path d="M1 8.500h22V23H1z" fill="#fff" /><path d="M0 4L22 0l1 4L1 8z" fill="#fff" /><path d="M4 3l3 4M9 2l3 4M14 1l3 4M19 .5l3 4" stroke="#303135" strokeWidth="2" /></svg>
      </Task>
      <Task bar>
        <svg width="25" height="27" viewBox="0 0 25 27"><path d="M1 4v11c0 4 12 4 12 0V4z" fill="#f3b934" /><ellipse cx="7" cy="4" rx="6" ry="3" fill="#ffe18a" /><path d="M17 3h6v5M1 20v6h6" stroke="#3f8f4f" strokeWidth="1.500" fill="none" /><path d="M13 14.500l9 10.500M20 17L12 25" stroke="#b9bcc2" strokeWidth="2" /><circle cx="21" cy="15" r="2.300" fill="none" stroke="#b9bcc2" strokeWidth="1.500" /></svg>
      </Task>
      <Task bar>
        <svg width="24" height="24" viewBox="0 0 24 24"><path d="M8 2l14 1-5 19H2z" fill="#8fd0e2" /><path d="M13 2l9 1-5 19-8 0z" fill="#5b9fb4" /><path d="M2 20l13 .5 6-9-3.500 12L2 22z" fill="#e8f1f4" /><path d="M8 2l14 1" stroke="#e9eef0" strokeWidth="2" strokeDasharray="1.500 1" /></svg>
      </Task>
      <Task bar>
        <svg width="24" height="24" viewBox="0 0 24 24"><path d="M0 0h24v24H0z" fill="#f2c811" /><path d="M6.500 16.500H6a2 2 0 0 1-2-2v-5a2 2 0 0 1 2-2h12a2 2 0 0 1 2 2v5a2 2 0 0 1-1 2" fill="none" stroke="#333" strokeWidth="1.300" /><path d="M8 15h1.500v3H8zM10.500 13H12v5h-1.500zM13 14h1.500v4H13zM15.500 10H17v8h-1.500z" fill="#222" /></svg>
      </Task>
      <Task bar active>
        <svg width="25" height="26" viewBox="0 0 24 24"><path fillRule="evenodd" d="M17.500.5L23.500 3v18l-6 2.500L7.500 14.200 3 17.700.5 16.500v-9L3 6.300l4.500 3.500zM17.500 7L11 12l6.500 5zM3 9.300v5.400L5.700 12z" fill="#68217a" stroke="#fff" strokeWidth="1.100" /></svg>
      </Task>
      <div className="flex flex-1 items-center text-[#f0f0f0]">
        <svg className="ml-[25px]" width="16" height="16" viewBox="0 0 16 16" fill="none" stroke="currentColor" strokeWidth="1.200"><circle cx="11" cy="3.500" r="2.500" /><path d="M8 8.500c1-2.500 6-2.500 7 1.500" /><circle cx="5" cy="8.500" r="2.500" /><path d="M1 15.500c0-5.500 8-5.500 8 0" /></svg>
        <svg className="ml-[22px]" width="12" height="7" viewBox="0 0 12 7" fill="none" stroke="currentColor" strokeWidth="1.400"><path d="M.7 6.300L6 1l5.300 5.300" /></svg>
        <svg className="ml-[11px]" width="14" height="12" viewBox="0 0 24 20" fill="currentColor"><path d={DROP} /></svg>
        <svg className="ml-[9px]" width="16" height="9" viewBox="0 0 16 9"><path d="M.7.7H13.500v7.600H.7z" fill="none" stroke="currentColor" strokeWidth="1.300" /><path d="M3 2.500h5v4H3zM14 3h2v3h-2z" fill="currentColor" /></svg>
        <svg className="ml-[8px]" width="17" height="11" viewBox="0 0 17 11" fill="currentColor"><path d="M4 11C-1 11 0 5.500 3.500 6 3 1 9.500-1 11.500 3.500 14.500 3 15 6 14.500 6.500 18 7 17 11 14.500 11z" /></svg>
        <svg className="ml-[9px]" width="14" height="14" viewBox="0 0 14 14" fill="none" stroke="currentColor" strokeWidth="1.200"><path d="M1 13C1 6.500 6.500 1.500 13 1.500M4 13c0-5 4-8.500 9-8.500M7 13c0-3.500 2.500-5.500 6-5.500M10 13c0-1.500 1.500-2.500 3-2.500" /><circle cx="12" cy="12.500" r="1" fill="currentColor" /></svg>
        <svg className="ml-[8px]" width="17" height="14" viewBox="0 0 17 14" fill="none" stroke="currentColor" strokeWidth="1.200"><path d="M1 5v4h2.500L7 12V2L3.500 5zM9 5q1.500 2 0 4M11 3q3 4 0 8M13.500 1.500q4 5.500 0 11" /></svg>
        <span className="ml-[9px] w-[25px] text-[12px] tracking-[-0.35px]">ENG</span>
        <div className="ml-[8px] flex w-16 flex-col items-center whitespace-nowrap text-[12px] leading-[18px] tracking-[-0.45px]"><span>9:42 PM</span><span>6/03/2019</span></div>
        <div className="relative ml-[15px] h-[22px] w-6">
          <svg width="16" height="16" viewBox="0 0 16 16"><path d="M0 0h15v12H7l-3 3.500V12H0z" fill="#fff" /><path d="M2.500 3.500h10M2.500 6h10M2.500 8.500h10" stroke="#303135" /></svg>
          <div className="absolute left-[7px] top-[8px] flex h-4 w-4 items-center justify-center rounded-full border border-[#aaa] bg-[#303135] text-[11px] leading-none">5</div>
        </div>
        <div className="ml-auto mr-1 h-full w-px bg-[#6a6b6f]" />
      </div>
    </div>
  );
}

export default function App() {
  return (
    <div className={"relative flex h-[768px] w-[1366px] flex-col overflow-hidden bg-[#d6dbe9] " + UI}>
      <TitleBar />
      <MenuBar />
      <ToolBarTop />
      <ToolBarFormat />
      <div className="mt-[2px] flex h-[600px] shrink-0 bg-[#2b3b59]">
        <div className="flex w-[31px] shrink-0">
          <div className="mt-[7px] h-[41px] w-[6px] bg-[#465a7d]" />
          <div className="mt-[6px] h-12 w-[22px] text-[12px] leading-[22px] tracking-[-0.350px] text-white [writing-mode:vertical-rl]">Toolbox</div>
        </div>
        <div className="flex w-[997px] shrink-0 flex-col pt-[6px]">
          <Document />
          <OutputPanel />
        </div>
        <div className="w-[6px] shrink-0" />
        <PropertiesPanel />
      </div>
      <div className="flex h-[23px] shrink-0 items-center bg-[#007acc] pl-1 text-[12px] tracking-[-0.450px] text-white">Ready</div>
      <TaskBar />
      <ReportData />
    </div>
  );
}
